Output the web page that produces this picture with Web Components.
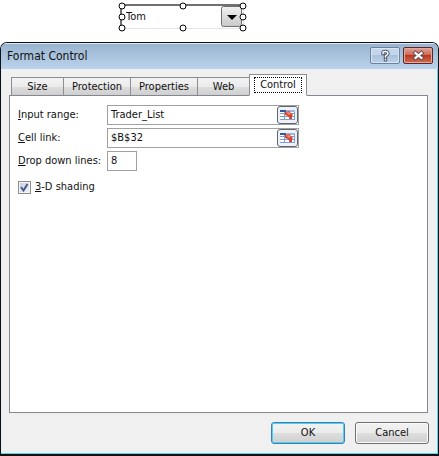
<!DOCTYPE html>
<html lang="en">
<head>
<meta charset="utf-8">
<title>Format Control</title>
<style>
    html {
        height: 100%;
    }

    body {
        margin: 0;
        min-height: 100%;
        display: flex;
        flex-direction: column;
        gap: 13px;
        background: #fff;
        color: #111;
        font: 11px/16px "DejaVu Sans Condensed", "Noto Sans", sans-serif;
    }

    form-dialog {
        flex: 1;
    }
</style>
</head>
<body>
<sheet-combo></sheet-combo>
<form-dialog heading="Format Control">
    <tab-strip slot="tabs"></tab-strip>
    <control-panel></control-panel>
    <push-button slot="actions" label="OK" primary></push-button>
    <push-button slot="actions" label="Cancel"></push-button>
</form-dialog>

<script>
    class SheetCombo extends HTMLElement {
        constructor() {
            super();
            this.attachShadow({ mode: 'open' });
        }

        connectedCallback() {
            // the eight resize handles of a selected form control
            const spots = [[0, 0], [50, 0], [100, 0], [0, 50], [100, 50], [0, 100], [50, 100], [100, 100]];
            this.shadowRoot.innerHTML = `
                <style>
                    :host {
                        display: block;
                        padding: 4px 0 0 120px;
                    }

                    .box {
                        position: relative;
                        box-sizing: border-box;
                        width: 124px;
                        height: 25px;
                        border: 1px solid #e4e4e4;
                        border-top: 2px solid #707070;
                        border-left: 2px solid #707070;
                        display: flex;
                    }

                    select {
                        appearance: none;
                        width: 100%;
                        border: 0;
                        padding: 0 4px;
                        background: none;
                        font: inherit;
                        color: inherit;
                    }

                    .arrow {
                        position: absolute;
                        right: 1px;
                        top: 0;
                        pointer-events: none;
                    }

                    i {
                        position: absolute;
                        width: 5px;
                        height: 5px;
                        border: 1px solid #000;
                        border-radius: 50%;
                        background: #fff;
                        transform: translate(-50%, -50%);
                    }
                </style>
                <div class="box">
                    <select aria-label="Trader"><option>Tom</option></select>
                    <svg class="arrow" width="21" height="21" viewBox="0 0 21 21">
                        <defs><linearGradient id="g" x2="0" y2="1"><stop stop-color="#f2f2f2"/><stop offset="1" stop-color="#c8c8c8"/></linearGradient></defs>
                        <rect x=".5" y=".5" width="20" height="20" rx="2" fill="url(#g)" stroke="#707070"/>
                        <path d="M6 9h10l-5 5z" fill="#000"/>
                    </svg>
                    ${spots.map(([x, y]) => `<i style="left:${x}%;top:${y}%"></i>`).join('')}
                </div>
            `;
        }
    }

    class FormDialog extends HTMLElement {
        constructor() {
            super();
            this.attachShadow({ mode: 'open' });
        }

        connectedCallback() {
            this.shadowRoot.innerHTML = `
                <style>
                    :host {
                        display: flex;
                        flex-direction: column;
                        box-sizing: border-box;
                        border: 1px solid #111;
                        border-bottom-width: 2px;
                        border-radius: 7px 7px 0 0;
                        background: #f0f0f0;
                        box-shadow: inset -1px -1px #5fd3f3, inset 1px 0 #e4edf7;
                        overflow: hidden;
                    }

                    header {
                        display: flex;
                        align-items: flex-start;
                        gap: 3px;
                        height: 26px;
                        padding: 0 5px 0 6px;
                        background: linear-gradient(#98b3cf, #bbd3ec);
                        box-shadow: inset 0 1px #dfeaf5;
                    }

                    h1 {
                        flex: 1;
                        margin: 0;
                        padding-top: 5px;
                        font: inherit;
                        font-size: 12px;
                    }

                    header button {
                        display: block;
                        margin-top: 4px;
                        width: 30px;
                        height: 17px;
                        padding: 0;
                        border: 1px solid #6c819c;
                        border-radius: 2px;
                        background: linear-gradient(#c4d6ea 45%, #a9c1da 50%, #bcd3ea);
                        box-shadow: inset 0 0 0 1px #d8e6f4;
                    }

                    header .close {
                        border-color: #5b2626;
                        background: linear-gradient(#dfa297, #cf6a55 45%, #b93a20 50%, #d06d50);
                        box-shadow: inset 0 0 0 1px #e3a99d;
                    }

                    header svg {
                        display: block;
                        margin: auto;
                    }

                    main {
                        flex: 1;
                        display: flex;
                        flex-direction: column;
                        padding: 5px 10px 0 8px;
                    }

                    footer {
                        display: flex;
                        justify-content: flex-end;
                        gap: 10px;
                        padding: 9px 9px 10px;
                    }
                </style>
                <header>
                    <h1>${this.getAttribute('heading')}</h1>
                    <button aria-label="Help">
                        <svg width="11" height="13" viewBox="0 0 11 13" fill="none" stroke-linecap="square">
                            <path d="M3 4.5V3.5Q3 2.5 5.5 2.5T8 4.5Q8 5.5 5.5 7V8M5.5 10.5v.2" stroke="#4c586d" stroke-width="3.4"/>
                            <path d="M3 4.5V3.5Q3 2.5 5.5 2.5T8 4.5Q8 5.5 5.5 7V8M5.5 10.5v.2" stroke="#fff" stroke-width="1.4"/>
                        </svg>
                    </button>
                    <button class="close" aria-label="Close">
                        <svg width="13" height="11" viewBox="0 0 13 11" fill="none" stroke-linecap="square">
                            <path d="M3.5 3l6 5m0-5l-6 5" stroke="#5d4c58" stroke-width="4"/>
                            <path d="M3.5 3l6 5m0-5l-6 5" stroke="#fff" stroke-width="2.2"/>
                        </svg>
                    </button>
                </header>
                <main>
                    <slot name="tabs"></slot>
                    <slot></slot>
                </main>
                <footer><slot name="actions"></slot></footer>
            `;
        }
    }

    class TabStrip extends HTMLElement {
        constructor() {
            super();
            this.attachShadow({ mode: 'open' });
        }

        connectedCallback() {
            this.shadowRoot.innerHTML = `
                <style>
                    :host {
                        display: block;
                        padding-left: 2px;
                        margin-bottom: -1px;
                    }

                    div {
                        display: flex;
                        align-items: flex-end;
                    }

                    button {
                        box-sizing: border-box;
                        height: 19px;
                        margin-right: -1px;
                        padding: 0;
                        border: 1px solid #8c8e94;
                        background: linear-gradient(#f3f3f3, #ebebeb 50%, #dcdcdc 55%, #cfcfcf);
                        font: inherit;
                        color: inherit;
                    }

                    button:nth-child(1), button:nth-child(4) {
                        width: 53px;
                    }

                    button:nth-child(2), button:nth-child(3) {
                        width: 68px;
                    }

                    button[aria-selected=true] {
                        position: relative;
                        width: 58px;
                        height: 22px;
                        padding: 2px 4px;
                        border-bottom-color: #fff;
                        background: #fff;
                    }

                    button[aria-selected=true] span {
                        display: block;
                        line-height: 14px;
                        border: 1px dotted #000;
                    }
                </style>
                <div role="tablist">
                    <button role="tab">Size</button>
                    <button role="tab">Protection</button>
                    <button role="tab">Properties</button>
                    <button role="tab">Web</button>
                    <button role="tab" aria-selected="true"><span>Control</span></button>
                </div>
            `;
        }
    }

    class RangeInput extends HTMLElement {
        constructor() {
            super();
            this.attachShadow({ mode: 'open' });
        }

        connectedCallback() {
            const [key, ...rest] = this.getAttribute('label');
            const picker = this.hasAttribute('picker');
            this.shadowRoot.innerHTML = `
                <style>
                    :host {
                        display: flex;
                        align-items: center;
                    }

                    label {
                        width: 89px;
                        white-space: nowrap;
                    }

                    .field {
                        display: flex;
                        box-sizing: border-box;
                        width: 30px;
                        height: 20px;
                        border: 1px solid #a0a0a0;
                        background: #fff;
                    }

                    .field.wide {
                        width: 192px;
                    }

                    input {
                        flex: 1;
                        min-width: 0;
                        border: 0;
                        padding: 0 0 0 3px;
                        background: none;
                        font: inherit;
                        color: inherit;
                    }

                    button {
                        padding: 0;
                        width: 21px;
                        height: 18px;
                        border: 1px solid #5f6670;
                        border-radius: 3px;
                        background: #eef2f8;
                    }

                    svg {
                        display: block;
                        margin: auto;
                    }
                </style>
                <label for="field"><u>${key}</u>${rest.join('')}</label>
                <div class="field ${picker ? 'wide' : ''}">
                    <input id="field" value="${this.getAttribute('value')}">
                    ${picker ? `<button aria-label="Select range">
                        <svg width="17" height="14" viewBox="0 0 17 14">
                            <path d="M1 2h15v10H1z" fill="#fff"/>
                            <path d="M1 5.5h15M1 8.5h15M1 11.5h15M5.5 2v10M10.5 2v10M15.5 2v10" stroke="#7d9cd0"/>
                            <path d="M1 2h6v2H1z" fill="#34569c"/>
                            <path d="M7 2h9v2H7z" fill="#9db6df"/>
                            <path d="M6 4l4-1 4 4-1 1v3h-2l-2-3-3-1z" fill="#d8432c"/>
                            <path d="M7 4.500l3-.5 2 2-2 1z" fill="#f08a72"/>
                        </svg>
                    </button>` : ''}
                </div>
            `;
        }
    }

    class ControlPanel extends HTMLElement {
        constructor() {
            super();
            this.attachShadow({ mode: 'open' });
        }

        connectedCallback() {
            this.shadowRoot.innerHTML = `
                <style>
                    :host {
                        flex: 1;
                        display: flex;
                        flex-direction: column;
                        gap: 3px;
                        padding: 9px 8px;
                        border: 1px solid #828790;
                        background: #fff;
                    }

                    .check {
                        display: flex;
                        align-items: center;
                        gap: 4px;
                        margin-top: 5px;
                    }

                    input {
                        appearance: none;
                        box-sizing: border-box;
                        width: 13px;
                        height: 13px;
                        margin: 0;
                        border: 1px solid #8e8f8f;
                        background: linear-gradient(135deg, #c6ced8, #f4f6f8);
                        box-shadow: inset 0 0 0 1px #f4f4f4;
                    }

                    .box {
                        position: relative;
                        display: flex;
                    }

                    svg {
                        position: absolute;
                        inset: 0;
                        pointer-events: none;
                    }
                </style>
                <range-input label="Input range:" value="Trader_List" picker></range-input>
                <range-input label="Cell link:" value="$B$32" picker></range-input>
                <range-input label="Drop down lines:" value="8"></range-input>
                <div class="check">
                    <span class="box">
                        <input type="checkbox" id="shading" checked>
                        <svg width="13" height="13" viewBox="0 0 13 13"><path d="M3 6l2.500 3.500L9.500 3" fill="none" stroke="#44598f" stroke-width="2"/></svg>
                    </span>
                    <label for="shading"><u>3</u>-D shading</label>
                </div>
            `;
        }
    }

    class PushButton extends HTMLElement {
        constructor() {
            super();
            this.attachShadow({ mode: 'open' });
        }

        connectedCallback() {
            this.shadowRoot.innerHTML = `
                <style>
                    :host {
                        display: block;
                    }

                    button {
                        display: block;
                        box-sizing: border-box;
                        width: 74px;
                        height: 22px;
                        padding: 0;
                        border: 1px solid #707070;
                        border-radius: 3px;
                        background: linear-gradient(#f2f2f2, #ebebeb 50%, #dddddd 51%, #cfcfcf);
                        box-shadow: inset 0 0 0 1px #fafafa;
                        font: inherit;
                        color: inherit;
                    }

                    :host([primary]) button {
                        border-color: #3c7fb1;
                        box-shadow: inset 0 0 0 1px #48d0f5;
                    }
                </style>
                <button>${this.getAttribute('label')}</button>
            `;
        }
    }

    customElements.define('sheet-combo', SheetCombo);
    customElements.define('form-dialog', FormDialog);
    customElements.define('tab-strip', TabStrip);
    customElements.define('range-input', RangeInput);
    customElements.define('control-panel', ControlPanel);
    customElements.define('push-button', PushButton);
</script>
</body>
</html>
